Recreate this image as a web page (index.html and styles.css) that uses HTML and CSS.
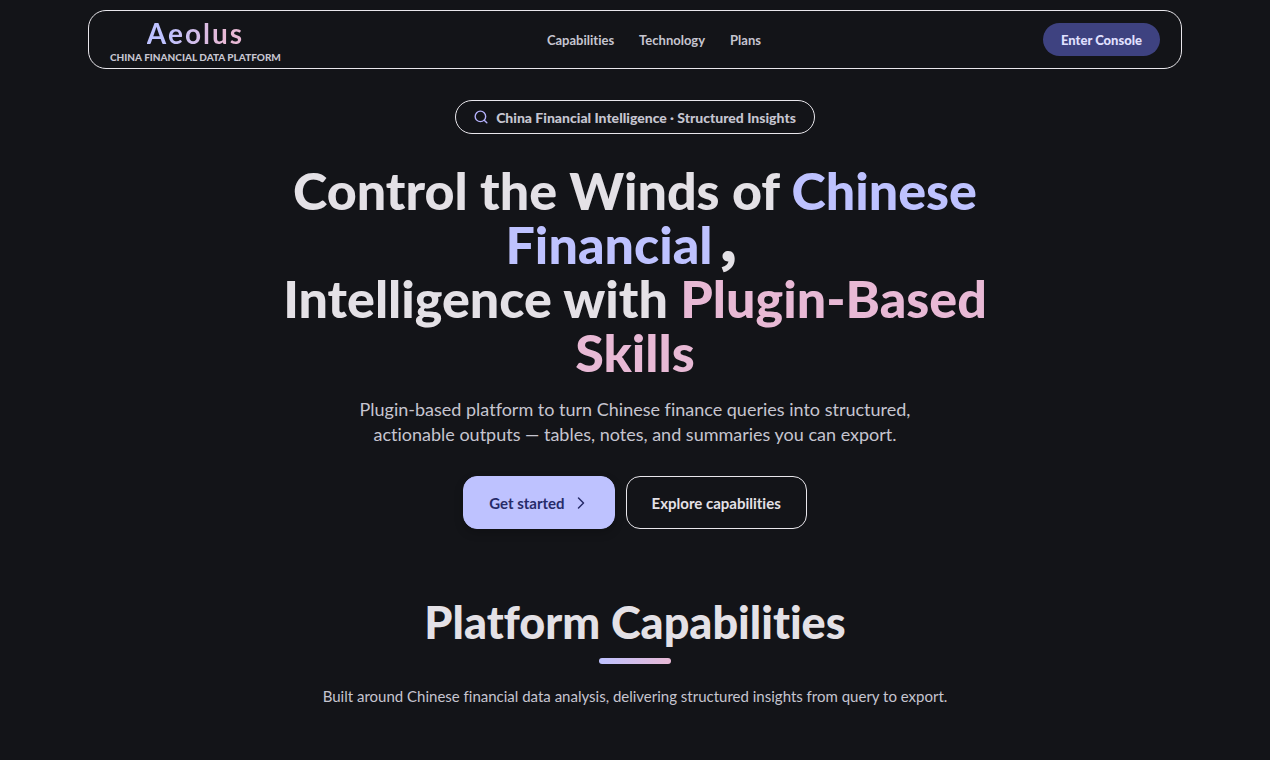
FILE: index.html
```html
<!DOCTYPE html>
<html lang="en">
<head>
<meta charset="utf-8">
<meta name="viewport" content="width=device-width, initial-scale=1">
<title>Aeolus</title>
<link rel="stylesheet" href="styles.css">
</head>
<body>
<header class="navbar">
  <a class="brand" href="#">
    <span class="brand-name">Aeolus</span>
    <span class="brand-tag">CHINA FINANCIAL DATA PLATFORM</span>
  </a>
  <nav class="nav-links">
    <a href="#capabilities">Capabilities</a>
    <a href="#technology">Technology</a>
    <a href="#plans">Plans</a>
  </nav>
  <button class="console-btn" type="button">Enter Console</button>
</header>
<main>
  <section class="hero">
    <p class="pill">
      <svg class="pill-icon" viewBox="0 0 24 24" aria-hidden="true"><circle cx="11" cy="11" r="9"/><path d="M17.500 17.500 22 22"/></svg>
      <span>China Financial Intelligence · Structured Insights</span>
    </p>
    <h1 class="hero-title">Control the Winds of <span class="accent-blue">Chinese Financial</span>，<br>Intelligence with <span class="accent-pink">Plugin-Based Skills</span></h1>
    <p class="hero-text">Plugin-based platform to turn Chinese finance queries into structured, actionable outputs — tables, notes, and summaries you can export.</p>
    <div class="hero-actions">
      <button class="btn btn-primary" type="button">Get started
        <svg class="btn-icon" viewBox="0 0 16 16" aria-hidden="true"><path d="m5.500 3 5 5-5 5"/></svg>
      </button>
      <button class="btn btn-outline" type="button">Explore capabilities</button>
    </div>
  </section>
  <section class="capabilities" id="capabilities">
    <h2 class="section-title">Platform Capabilities</h2>
    <div class="section-bar"></div>
    <p class="section-text">Built around Chinese financial data analysis, delivering structured insights from query to export.</p>
  </section>
</main>
</body>
</html>
```
FILE: styles.css
```css
* { box-sizing: border-box; }
body {
  margin: 0;
  padding: 10px 88px 0;
  background: #131418;
  color: #e4e1e6;
  font-family: Lato, "Noto Sans CJK SC", sans-serif;
  font-variant-ligatures: none;
}
h1, h2, p { margin: 0; }
a { color: inherit; text-decoration: none; }
button { font-family: inherit; font-variant-ligatures: none; cursor: pointer; }
.navbar {
  display: flex;
  justify-content: space-between;
  align-items: center;
  height: 59px;
  padding: 0 21px;
  border: 1px solid #e9e7ec;
  border-radius: 18px;
}
.brand {
  display: flex;
  flex-direction: column;
  align-items: center;
}
.brand-name {
  font-size: 28px;
  line-height: 34px;
  font-weight: 700;
  letter-spacing: 2px;
  background: linear-gradient(90deg, #bec2ff 20%, #e8b9d5 80%);
  background-clip: text;
  -webkit-background-clip: text;
  color: transparent;
}
.brand-tag {
  font-size: 10px;
  line-height: 14px;
  font-weight: 900;
  color: #c6c5d0;
}
.nav-links {
  display: flex;
  gap: 25px;
  margin-right: 16px;
  font-size: 13px;
  line-height: 20px;
  font-weight: 700;
  color: #c6c5d0;
}
.console-btn {
  height: 33px;
  padding: 0 18px;
  border: 0;
  border-radius: 17px;
  background: #3e4280;
  color: #e0e0ff;
  font-size: 13px;
  font-weight: 900;
}
.hero {
  display: flex;
  flex-direction: column;
  align-items: center;
  padding-top: 31px;
  text-align: center;
}
.pill {
  display: flex;
  align-items: center;
  gap: 8px;
  height: 34px;
  padding: 0 18px;
  border: 1px solid #e9e7ec;
  border-radius: 17px;
  font-size: 14px;
  font-weight: 900;
  color: #c6c5d0;
}
.pill-icon {
  width: 14px;
  height: 14px;
  fill: none;
  stroke: #b4b0fa;
  stroke-width: 2.4;
  stroke-linecap: round;
}
.hero-title {
  max-width: 760px;
  margin-top: 29px;
  font-size: 52px;
  line-height: 54px;
  font-weight: 900;
}
.accent-blue { color: #bec2ff; }
.accent-pink { color: #e8b9d5; }
.hero-text {
  max-width: 600px;
  margin-top: 18px;
  font-size: 18px;
  line-height: 25px;
  color: #c6c5d0;
}
.hero-actions {
  display: flex;
  gap: 11px;
  margin-top: 29px;
}
.btn {
  display: flex;
  align-items: center;
  gap: 8px;
  height: 53px;
  padding: 0 25px;
  border: 1px solid #e9e7ec;
  border-radius: 14px;
  font-size: 15px;
  font-weight: 700;
}
.btn-primary {
  border-color: #bec2ff;
  background: #bec2ff;
  color: #272b69;
  box-shadow: 0 4px 10px rgba(0, 0, 0, 0.2);
}
.btn-outline {
  background: transparent;
  color: #e4e1e6;
}
.btn-icon {
  width: 16px;
  height: 16px;
  fill: none;
  stroke: currentColor;
  stroke-width: 1.5;
  stroke-linecap: round;
  stroke-linejoin: round;
}
.capabilities {
  display: flex;
  flex-direction: column;
  align-items: center;
  padding: 66px 0 48px;
  text-align: center;
}
.section-title {
  font-size: 45px;
  line-height: 55px;
  font-weight: 900;
}
.section-bar {
  width: 72px;
  height: 6px;
  margin-top: 8px;
  border-radius: 3px;
  background: linear-gradient(90deg, #bec2ff, #e8b9d5);
}
.section-text {
  margin-top: 22px;
  font-size: 15px;
  line-height: 21px;
  color: #c6c5d0;
}
```
